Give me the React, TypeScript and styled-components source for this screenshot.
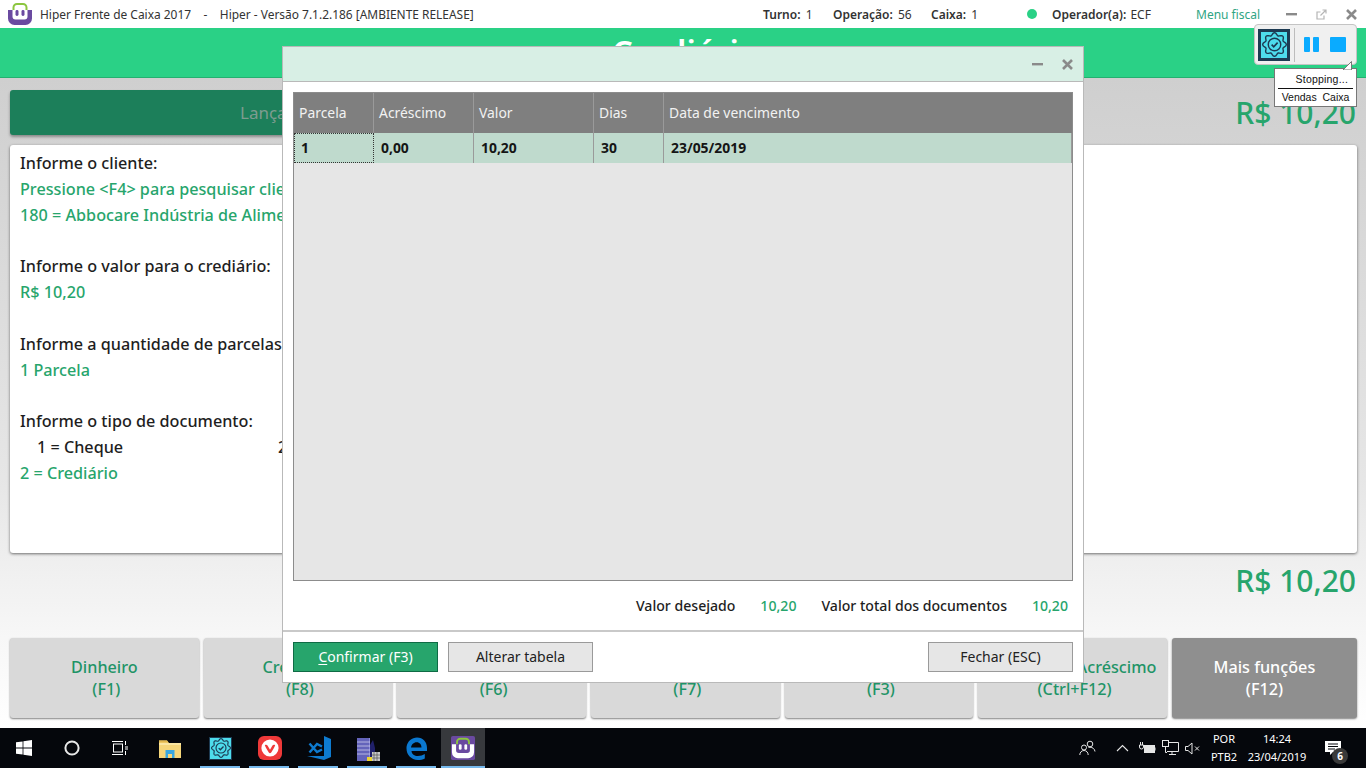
import React from "react";
import styled, { createGlobalStyle } from "styled-components";

const GlobalStyle = createGlobalStyle`
  html, body {
    margin: 0;
    padding: 0;
    width: 1366px;
    height: 768px;
    overflow: hidden;
    font-family: "Noto Sans", "Open Sans", sans-serif;
    color: #1e1e1e;
  }
  * { box-sizing: border-box; }
`;

const Page = styled.div`
  position: relative;
  width: 1366px;
  height: 768px;
  display: flex;
  flex-direction: column;
  overflow: hidden;
`;

const TitleBar = styled.div`
  height: 28px;
  flex: none;
  background: #fff;
  display: flex;
  align-items: center;
  padding-left: 7px;
  font-size: 12px;
  color: #333;
`;

const AppTitle = styled.span`
  margin-left: 7px;
  white-space: pre;
  width: 723px;
  font-size: 11.95px;
`;

const Stat = styled.span<{ $width: number; $tight?: number }>`
  width: ${(p) => p.$width}px;
  white-space: pre;
  b {
    font-weight: 600;
    margin-right: ${(p) => -(p.$tight ?? 1)}px;
  }
`;

const StatusDot = styled.span`
  width: 10px;
  height: 10px;
  border-radius: 50%;
  background: #2ad186;
  margin-right: 15px;
`;

const MenuFiscal = styled.span`
  width: 90px;
  color: #2fa583;
`;

const WinButtons = styled.div`
  display: flex;
  align-items: center;
  gap: 19px;
`;

const Header = styled.div`
  height: 50px;
  flex: none;
  background: #2ad186;
  border-bottom: 1px solid #24b070;
  color: #fff;
  font-size: 33px;
  font-weight: 600;
  text-align: center;
  line-height: 48px;
  padding-left: 5px;
`;

const Main = styled.div`
  flex: 1;
  display: flex;
  flex-direction: column;
  padding: 12px 9px 10px 10px;
  background: linear-gradient(#cfcfcf 0, #e6e6e6 400px, #f7f7f7 560px, #ffffff 650px);
`;

const TopRow = styled.div`
  display: flex;
  justify-content: space-between;
  height: 45px;
`;

const StepBar = styled.div`
  width: 1000px;
  height: 45px;
  background: #1c7f5a;
  border-radius: 3px;
  box-shadow: 0 2px 3px rgba(0, 0, 0, 0.35);
  padding-left: 230px;
  color: #7e9c90;
  font-size: 17px;
  line-height: 45px;
`;

const Total = styled.div`
  color: #27a56c;
  font-size: 30px;
  font-weight: 500;
  line-height: 46px;
  padding-right: 1px;
`;

const Card = styled.div`
  margin-top: 10px;
  height: 408px;
  background: #fff;
  border-radius: 3px;
  box-shadow: 0 1px 3px rgba(0, 0, 0, 0.55);
  padding: 6px 10px 5px;
  font-size: 16.2px;
  line-height: 25.83px;
`;

const Line = styled.div<{ $green?: boolean; $gap?: boolean }>`
  font-weight: 500;
  color: ${(p) => (p.$green ? "#27a56c" : "#1e1e1e")};
  margin-top: ${(p) => (p.$gap ? "25.83px" : "0")};
  white-space: nowrap;
`;

const OptionRow = styled.div`
  display: flex;
  padding-left: 17px;
  font-weight: 500;
`;

const Option = styled.span`
  width: 241px;
`;

const BottomTotal = styled.div`
  height: 85px;
  display: flex;
  justify-content: flex-end;
  padding-top: 5px;
`;

const Actions = styled.div`
  display: grid;
  grid-template-columns: repeat(6, 188.67px) 185px;
  column-gap: 5px;
  height: 80px;
`;

const ActionButton = styled.div<{ $dark?: boolean }>`
  background: ${(p) => (p.$dark ? "#8f8f8f" : "#d9d9d9")};
  color: ${(p) => (p.$dark ? "#fff" : "#1f9467")};
  border-radius: 3px;
  box-shadow: 0 1px 2px rgba(0, 0, 0, 0.5);
  display: flex;
  flex-direction: column;
  align-items: center;
  justify-content: center;
  font-size: 16.2px;
  font-weight: 500;
  line-height: 22px;
  text-align: center;
  white-space: nowrap;
`;

const ActionKey = styled.span<{ $dark?: boolean }>`
  padding-left: ${(p) => (p.$dark ? 0 : 4)}px;
`;

const Taskbar = styled.div`
  height: 40px;
  flex: none;
  background: #05070c;
  display: flex;
  color: #fff;
`;

const TaskItem = styled.div<{ $open?: boolean; $active?: boolean; $width?: number }>`
  position: relative;
  width: ${(p) => p.$width ?? 49}px;
  height: 40px;
  display: flex;
  align-items: center;
  justify-content: center;
  background: ${(p) => (p.$active ? "#37393d" : "transparent")};
  &::after {
    content: "";
    display: ${(p) => (p.$open ? "block" : "none")};
    position: absolute;
    left: ${(p) => (p.$active ? 0 : 4)}px;
    right: ${(p) => (p.$active ? 0 : 5)}px;
    bottom: 0;
    height: 2px;
    background: #76b9ed;
  }
`;

const Tray = styled.div`
  margin-left: auto;
  display: flex;
  align-items: center;
  font-size: 11px;
  color: #fff;
`;

const TrayIcon = styled.div<{ $width: number; $gap?: number }>`
  width: ${(p) => p.$width}px;
  margin-left: ${(p) => p.$gap ?? 0}px;
  display: flex;
  justify-content: center;
  align-items: center;
`;

const TrayText = styled.div<{ $width: number }>`
  width: ${(p) => p.$width}px;
  text-align: center;
  line-height: 18px;
  white-space: nowrap;
`;

const Notify = styled.div`
  position: relative;
  width: 56px;
  height: 40px;
  display: flex;
  align-items: center;
  padding-left: 15px;
`;

const NotifyBadge = styled.span`
  position: absolute;
  left: 22px;
  top: 20px;
  width: 16px;
  height: 16px;
  border-radius: 50%;
  background: #3a3a3a;
  color: #fff;
  font-size: 10px;
  font-weight: 700;
  line-height: 16px;
  text-align: center;
`;

const Modal = styled.div`
  position: absolute;
  left: 282px;
  top: 46px;
  width: 802px;
  height: 637px;
  background: #fff;
  border: 1px solid #b9b9b9;
  display: flex;
  flex-direction: column;
`;

const ModalTitle = styled.div`
  height: 35px;
  flex: none;
  background: #d8efe5;
  border-bottom: 1px solid #b9b9b9;
  display: flex;
  align-items: center;
  justify-content: flex-end;
  gap: 19px;
  padding-right: 10px;
`;

const ModalBody = styled.div`
  flex: 1;
  padding: 10px 10px 0;
  display: flex;
  flex-direction: column;
`;

const Grid = styled.div`
  height: 489px;
  background: #e6e6e6;
  border: 1px solid #8c8c8c;
`;

const GridRow = styled.div<{ $head?: boolean }>`
  display: grid;
  grid-template-columns: 80px 100px 120px 70px 1fr;
  height: ${(p) => (p.$head ? 40 : 30)}px;
  background: ${(p) => (p.$head ? "#7f7f7f" : "#bfdacd")};
  color: ${(p) => (p.$head ? "#f2f2f2" : "#151515")};
  font-size: 13.9px;
  font-weight: ${(p) => (p.$head ? 400 : 700)};
  line-height: ${(p) => (p.$head ? 40 : 30)}px;
`;

const HeadCell = styled.div`
  padding-left: 5px;
  border-right: 1px solid #9a9a9a;
  &:last-child { border-right: 0; }
`;

const BodyCell = styled.div<{ $focus?: boolean }>`
  padding-left: ${(p) => (p.$focus ? 6 : 7)}px;
  border-right: 1px solid #9a9a9a;
  ${(p) => (p.$focus ? "border: 1px dotted #333; line-height: 28px;" : "")}
`;

const Summary = styled.div`
  height: 49px;
  flex: none;
  display: flex;
  justify-content: flex-end;
  align-items: center;
  font-size: 14.1px;
  font-weight: 500;
  padding-right: 5px;
`;

const SummaryValue = styled.span<{ $width: number }>`
  width: ${(p) => p.$width}px;
  text-align: right;
  color: #27a56c;
`;

const SummaryLabel = styled.span<{ $gap?: number }>`
  margin-left: ${(p) => p.$gap ?? 0}px;
`;

const ModalFooter = styled.div`
  height: 53px;
  flex: none;
  border-top: 2px solid #c9c9c9;
  padding: 10px 10px 0;
  display: flex;
`;

const DialogButton = styled.div<{ $primary?: boolean; $push?: boolean }>`
  height: 30px;
  width: 145px;
  margin-left: ${(p) => (p.$push ? "auto" : p.$primary ? "0" : "10px")};
  background: ${(p) => (p.$primary ? "#27a56c" : "#e6e6e6")};
  border: 1px solid ${(p) => (p.$primary ? "#0f6b45" : "#9a9a9a")};
  color: ${(p) => (p.$primary ? "#fff" : "#222")};
  font-size: 14px;
  line-height: 28px;
  text-align: center;
  u { text-underline-offset: 2px; }
`;

const Widget = styled.div`
  position: absolute;
  left: 1254px;
  top: 24px;
  width: 103px;
  height: 41px;
  background: #f0f0f0;
  border: 1px solid #c4c4c4;
  border-radius: 4px;
  display: flex;
  align-items: center;
  padding-left: 3px;
`;

const WidgetIcon = styled.div`
  width: 32px;
  height: 32px;
  background: #4edcec;
  border: 3px solid #1d3a52;
  display: flex;
  align-items: center;
  justify-content: center;
`;

const WidgetDivider = styled.div`
  width: 1px;
  height: 34px;
  background: #bdbdbd;
  margin: 0 9px 0 4px;
`;

const PauseBar = styled.div`
  width: 6px;
  height: 15px;
  background: #0aabff;
  margin-right: 3px;
  border-radius: 1px;
`;

const StopBox = styled.div`
  width: 16px;
  height: 15px;
  margin-left: 8px;
  background: #0aabff;
  border-radius: 1px;
`;

const Balloon = styled.div`
  position: absolute;
  left: 1274px;
  top: 68px;
  width: 83px;
  height: 39px;
  background: #fff;
  border: 1px solid #777;
  font-family: "Liberation Sans", Arial, sans-serif;
  font-size: 10.5px;
  color: #111;
  padding: 3px 3px 0;
  line-height: 14px;
`;

const BalloonTail = styled.svg`
  position: absolute;
  right: 3px;
  top: -8px;
  display: block;
`;

const BalloonTop = styled.div`
  text-align: right;
  padding-right: 5px;
  border-bottom: 1px solid #111;
  height: 17px;
  letter-spacing: 0.2px;
`;

const BalloonBottom = styled.div`
  text-align: center;
  white-space: pre;
  margin-top: 1px;
`;

const TileBox = styled.div`
  width: 23px;
  height: 23px;
  background: #4edcec;
  border: 1px solid #1d3a52;
  display: flex;
  align-items: center;
  justify-content: center;
`;

// contorno ondulado do selo (icone do app de automacao)
const scallop = (cx: number, cy: number, r: number, amp: number, n: number) => {
  const pts: string[] = [];
  for (let i = 0; i <= 120; i++) {
    const a = (i / 120) * Math.PI * 2;
    const rr = r + amp * Math.cos(a * n);
    const x = cx + rr * Math.cos(a);
    const y = cy + rr * Math.sin(a);
    pts.push(`${i === 0 ? "M" : "L"}${x.toFixed(2)} ${y.toFixed(2)}`);
  }
  return pts.join(" ") + "Z";
};

const BadgeIcon: React.FC<{ size: number }> = ({ size }) => (
  <svg width={size} height={size} viewBox="0 0 28 28" fill="none" stroke="#1d3a52" strokeWidth="1.6">
    <path d={scallop(14, 14, 11.8, 1.4, 8)} />
    <circle cx="14" cy="14" r="7" />
    <path d="M10.8 14.200l2.300 2.300 4.400-4.600" strokeWidth="1.900" />
  </svg>
);

const HiperLogo: React.FC<{ size: number; tile?: boolean }> = ({ size, tile }) => {
  const body = tile ? "#fff" : "#6a4aa0";
  return (
    <svg width={size} height={size} viewBox="0 0 26 26">
      {tile && <rect width="26" height="26" rx="2" fill="#6a4aa0" />}
      <path d="M6.500 9V6.500a3.500 3.500 0 0 1 3.500-3.500h6a3.500 3.500 0 0 1 3.500 3.500V9" fill="none" stroke="#8cc63f" strokeWidth="2" />
      <path d="M1 9h4.500v6.500a3 3 0 0 0 3 3h9a3 3 0 0 0 3-3V9H25v8.500a6.500 6.500 0 0 1-6.500 6.500h-11A6.500 6.500 0 0 1 1 17.500z" fill={body} />
      <rect x="8.500" y="9" width="3" height="6" rx="1.400" fill={body} />
      <rect x="14.500" y="9" width="3" height="6" rx="1.400" fill={body} />
    </svg>
  );
};

const MinusIcon: React.FC<{ color: string }> = ({ color }) => (
  <svg width="11" height="11" viewBox="0 0 11 11">
    <rect x="0" y="4" width="11" height="2.400" fill={color} />
  </svg>
);

const CloseIcon: React.FC<{ color: string }> = ({ color }) => (
  <svg width="11" height="11" viewBox="0 0 11 11">
    <path d="M1 1l9 9M10 1l-9 9" stroke={color} strokeWidth="2.600" />
  </svg>
);

const PopoutIcon = () => (
  <svg width="11" height="11" viewBox="0 0 11 11" fill="none" stroke="#b5b5b5" strokeWidth="1.200">
    <path d="M8 6.500V10H1V3h3.500" />
    <path d="M4.500 6.500L10 1M6.500 1H10v3.500" />
  </svg>
);

const WindowsIcon = () => (
  <svg width="16" height="16" viewBox="0 0 16 16" fill="#fff">
    <path d="M0 2.300l6.600-.9v6.200H0zM7.400 1.300L16 0v7.600H7.400zM0 8.400h6.600v6.200L0 13.700zM7.400 8.400H16V16l-8.600-1.300z" />
  </svg>
);

const SearchRing = () => (
  <svg width="16" height="16" viewBox="0 0 16 16" fill="none" stroke="#e8e8e8" strokeWidth="2">
    <circle cx="8" cy="8" r="6.600" />
  </svg>
);

const TaskViewIcon = () => (
  <svg width="16" height="16" viewBox="0 0 16 16" fill="none" stroke="#fff" strokeWidth="1">
    <rect x="1.500" y="4" width="9" height="8" />
    <path d="M0 1.500h11M0 14.500h11M13.500 1v4M13.500 11v4" />
    <path d="M13 7h3M13 9h3" />
  </svg>
);

const FolderIcon = () => (
  <svg width="22" height="19" viewBox="0 0 22 19">
    <path d="M0 1.500h8l2 2.500h12v15H0z" fill="#f6d67a" />
    <path d="M0 1.500h8l1.500 2H0z" fill="#e3b84e" />
    <path d="M0 4h22v2H0z" fill="#fbe6a2" />
    <path d="M6.500 11h9v8h-2.500v-4h-4v4h-2.500z" fill="#39a7e0" />
  </svg>
);

const VivaldiIcon = () => (
  <svg width="24" height="24" viewBox="0 0 24 24">
    <rect width="24" height="24" rx="6" fill="#ef3939" />
    <circle cx="12" cy="12" r="8.600" fill="#fff" />
    <path d="M6.800 9.200c1.200-.9 2.300-.4 2.900.6l2.300 4 2.300-4c.6-1 1.700-1.500 2.900-.6-1 2.400-3 5.800-4 7.300-.7 1-1.700 1-2.400 0-1-1.500-3-4.900-4-7.300z" fill="#ef3939" />
  </svg>
);

const VsCodeIcon = () => (
  <svg width="24" height="24" viewBox="0 0 24 24">
    <path d="M17 0l7 3v18l-7 3L0 20h17z" fill="#0e7bd0" />
    <path d="M2.500 7.500l7.500 8.500 5-2.500M2.500 16.500L10 8l5 2.500" fill="none" stroke="#0e7bd0" strokeWidth="2.400" />
  </svg>
);

const BuildingsIcon = () => (
  <svg width="24" height="26" viewBox="0 0 24 26">
    <rect x="1" y="3" width="13" height="23" fill="#8a8ad8" />
    <path d="M2 3v23M4 3v23M6 3v23M8 3v23M10 3v23M12 3v23" stroke="#2b2b90" strokeWidth="0.800" />
    <path d="M1 7h13M1 11h13M1 15h13M1 19h13" stroke="#d8d8f0" strokeWidth="0.700" />
    <path d="M14 10l3-5 2 8v13h-5z" fill="#20206a" />
    <rect x="16" y="17" width="8" height="9" fill="#c9c9c9" />
    <path d="M18 17v9M21 17v9M16 20h8M16 23h8" stroke="#555" strokeWidth="0.700" />
    <rect x="11" y="22" width="5" height="4" fill="#ecd430" />
  </svg>
);

const EdgeIcon = () => (
  <svg width="21" height="23" viewBox="0 0 21 23">
    <path
      d="M5 10.500h10.500c0-3-1.800-5.300-4.800-5.300C7.500 5.200 5.500 7.500 5 10.500zM.500 10C1.500 4 6 .5 11 .5c6 0 10 4.300 10 10.500v3H5.500c.3 3.300 3 5 6.300 5 2.800 0 5-.7 7-2v4.500c-2 1-4.300 1.500-7 1.500C5 22.500.500 18 .500 11.500z"
      fill="#0b78d0"
      fillRule="evenodd"
    />
  </svg>
);

const PeopleIcon = () => (
  <svg width="17" height="16" viewBox="0 0 17 16" fill="none" stroke="#e6e6e6" strokeWidth="1">
    <circle cx="11" cy="4" r="2.800" />
    <circle cx="5" cy="7.500" r="2.500" />
    <path d="M.800 15c0-2.500 1.700-4.500 4.200-4.500s4.200 2 4.200 4.500M9.500 7.500c.4-.2 1-.3 1.500-.3 2.600 0 4.700 1.800 5 4.300" />
  </svg>
);

const ChevronIcon = () => (
  <svg width="13" height="8" viewBox="0 0 13 8" fill="none" stroke="#e6e6e6" strokeWidth="1.100">
    <path d="M1 7l5.500-5.500L12 7" />
  </svg>
);

const BatteryIcon = () => (
  <svg width="17" height="14" viewBox="0 0 17 14" fill="none" stroke="#e6e6e6" strokeWidth="1">
    <rect x="5.500" y="4.500" width="10" height="7" fill="#e6e6e6" />
    <path d="M1.500 1v3M3.500 1v3M.500 4h4v2a2 2 0 0 1-4 0z" />
    <path d="M16 6.500v3" />
  </svg>
);

const NetworkIcon = () => (
  <svg width="17" height="16" viewBox="0 0 17 16" fill="none" stroke="#e6e6e6" strokeWidth="1">
    <path d="M5 2.500h11.500v9H5M10 11.500v3M7 14.500h7" />
    <rect x=".500" y=".500" width="6" height="6" fill="#05070c" />
    <path d="M3.500 6.500v6H5" />
  </svg>
);

const MuteIcon = () => (
  <svg width="16" height="13" viewBox="0 0 16 13" fill="none" stroke="#e6e6e6" strokeWidth="1">
    <path d="M.500 4.500h2.500L7 1v11L3 8.500H.500z" />
    <path d="M10 4.500l4 4M14 4.500l-4 4" />
  </svg>
);

const NotifyIcon = () => (
  <svg width="16" height="15" viewBox="0 0 16 15">
    <path d="M0 0h16v11H8l-3 3v-3H0z" fill="#fff" />
    <path d="M3 3h10M3 5.500h10M3 8h7" stroke="#05070c" strokeWidth="1" />
  </svg>
);

const actions = [
  { label: "Dinheiro", key: "(F1)" },
  { label: "Crediário", key: "(F8)" },
  { label: "Cartão", key: "(F6)" },
  { label: "Cheque", key: "(F7)" },
  { label: "Convênio", key: "(F3)" },
  { label: "Desconto / Acréscimo", key: "(Ctrl+F12)" },
  { label: "Mais funções", key: "(F12)", dark: true },
];

const App: React.FC = () => {
  return (
    <Page>
      <GlobalStyle />
      <TitleBar>
        <HiperLogo size={26} />
        <AppTitle>{"Hiper Frente de Caixa 2017    -    Hiper - Versão 7.1.2.186 [AMBIENTE RELEASE]"}</AppTitle>
        <Stat $width={70}><b>Turno:</b>{"  1"}</Stat>
        <Stat $width={98}><b>Operação:</b>{"  56"}</Stat>
        <Stat $width={96}><b>Caixa:</b>{"  1"}</Stat>
        <StatusDot />
        <Stat $width={144} $tight={2}><b>Operador(a):</b>{"  ECF"}</Stat>
        <MenuFiscal>Menu fiscal</MenuFiscal>
        <WinButtons>
          <MinusIcon color="#8a8a8a" />
          <PopoutIcon />
          <CloseIcon color="#8a8a8a" />
        </WinButtons>
      </TitleBar>
      <Header>Crediário</Header>
      <Main>
        <TopRow>
          <StepBar>Lançamento de crediário</StepBar>
          <Total>R$ 10,20</Total>
        </TopRow>
        <Card>
          <Line>Informe o cliente:</Line>
          <Line $green>Pressione &lt;F4&gt; para pesquisar clientes</Line>
          <Line $green>180 = Abbocare Indústria de Alimentos</Line>
          <Line $gap>Informe o valor para o crediário:</Line>
          <Line $green>R$ 10,20</Line>
          <Line $gap>Informe a quantidade de parcelas:</Line>
          <Line $green>1 Parcela</Line>
          <Line $gap>Informe o tipo de documento:</Line>
          <OptionRow>
            <Option>1 = Cheque</Option>
            <Option>2 = Crediário</Option>
          </OptionRow>
          <Line $green>2 = Crediário</Line>
        </Card>
        <BottomTotal>
          <Total>R$ 10,20</Total>
        </BottomTotal>
        <Actions>
          {actions.map((a) => (
            <ActionButton key={a.key} $dark={a.dark}>
              <span>{a.label}</span>
              <ActionKey $dark={a.dark}>{a.key}</ActionKey>
            </ActionButton>
          ))}
        </Actions>
      </Main>
      <Taskbar>
        <TaskItem $width={48}><WindowsIcon /></TaskItem>
        <TaskItem $width={48}><SearchRing /></TaskItem>
        <TaskItem $width={48}><TaskViewIcon /></TaskItem>
        <TaskItem $width={52}><FolderIcon /></TaskItem>
        <TaskItem $open><TileBox><BadgeIcon size={20} /></TileBox></TaskItem>
        <TaskItem $open><VivaldiIcon /></TaskItem>
        <TaskItem $open><VsCodeIcon /></TaskItem>
        <TaskItem $open><BuildingsIcon /></TaskItem>
        <TaskItem $open><EdgeIcon /></TaskItem>
        <TaskItem $open $active $width={44}><HiperLogo size={24} tile /></TaskItem>
        <Tray>
          <TrayIcon $width={32}><PeopleIcon /></TrayIcon>
          <TrayIcon $width={28} $gap={5}><ChevronIcon /></TrayIcon>
          <TrayIcon $width={22}><BatteryIcon /></TrayIcon>
          <TrayIcon $width={24}><NetworkIcon /></TrayIcon>
          <TrayIcon $width={22}><MuteIcon /></TrayIcon>
          <TrayText $width={40}>POR<br />PTB2</TrayText>
          <TrayText $width={66}>14:24<br />23/04/2019</TrayText>
          <Notify>
            <NotifyIcon />
            <NotifyBadge>6</NotifyBadge>
          </Notify>
        </Tray>
      </Taskbar>

      <Modal>
        <ModalTitle>
          <MinusIcon color="#8a8a8a" />
          <CloseIcon color="#8a8a8a" />
        </ModalTitle>
        <ModalBody>
          <Grid>
            <GridRow $head>
              <HeadCell>Parcela</HeadCell>
              <HeadCell>Acréscimo</HeadCell>
              <HeadCell>Valor</HeadCell>
              <HeadCell>Dias</HeadCell>
              <HeadCell>Data de vencimento</HeadCell>
            </GridRow>
            <GridRow>
              <BodyCell $focus>1</BodyCell>
              <BodyCell>0,00</BodyCell>
              <BodyCell>10,20</BodyCell>
              <BodyCell>30</BodyCell>
              <BodyCell>23/05/2019</BodyCell>
            </GridRow>
          </Grid>
          <Summary>
            <SummaryLabel>Valor desejado</SummaryLabel>
            <SummaryValue $width={61}>10,20</SummaryValue>
            <SummaryLabel $gap={25}>Valor total dos documentos</SummaryLabel>
            <SummaryValue $width={61}>10,20</SummaryValue>
          </Summary>
        </ModalBody>
        <ModalFooter>
          <DialogButton $primary><u>C</u>onfirmar (F3)</DialogButton>
          <DialogButton>Alterar tabela</DialogButton>
          <DialogButton $push>Fechar (ESC)</DialogButton>
        </ModalFooter>
      </Modal>

      <Widget>
        <WidgetIcon><BadgeIcon size={25} /></WidgetIcon>
        <WidgetDivider />
        <PauseBar />
        <PauseBar />
        <StopBox />
      </Widget>
      <Balloon>
        <BalloonTail width="10" height="9" viewBox="0 0 10 9">
          <path d="M8.500 0.500V9H0z" fill="#fff" stroke="#777" strokeWidth="1" />
        </BalloonTail>
        <BalloonTop>Stopping...</BalloonTop>
        <BalloonBottom>{"Vendas  Caixa"}</BalloonBottom>
      </Balloon>
    </Page>
  );
};

export default App;
